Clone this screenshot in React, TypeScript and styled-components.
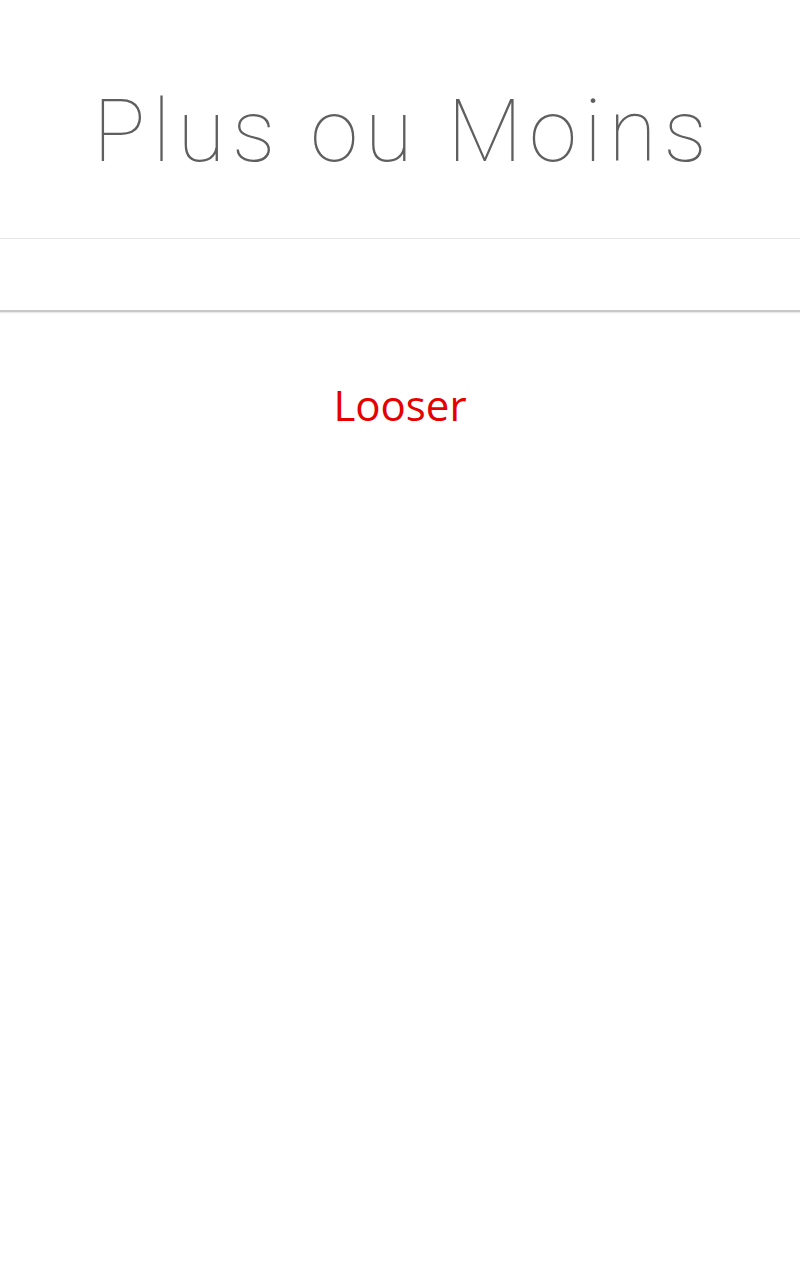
import React from "react";
import styled, { createGlobalStyle } from "styled-components";

const GlobalStyle = createGlobalStyle`
  html, body {
    margin: 0;
    padding: 0;
    background: #ffffff;
  }
`;

const Page = styled.div`
  display: flex;
  flex-direction: column;
  min-height: 1280px;
`;

const Header = styled.header`
  height: 239px;
  display: flex;
  align-items: center;
  justify-content: center;
  border-bottom: 1px solid #e6e6e6;
  box-sizing: border-box;
`;

const Title = styled.h1`
  margin: 0;
  font-family: Roboto, "Liberation Sans", sans-serif;
  font-weight: 100;
  font-size: 87px;
  letter-spacing: 7px;
  padding-left: 7px;
  color: #5f5f5f;
  line-height: 1;
  padding-top: 24px;
`;

const Guess = styled.input`
  display: block;
  width: 100%;
  height: 73px;
  box-sizing: border-box;
  border: none;
  border-bottom: 2px solid #c8c8c8;
  box-shadow: 0 1px 1px #e8e8e8;
  background: #ffffff;
  outline: none;
  font-family: "Open Sans", sans-serif;
  font-size: 32px;
  text-align: center;
  color: #555;
`;

const Message = styled.p<{ $tone: string }>`
  margin: 68px 0 0;
  text-align: center;
  font-family: "Open Sans", "Noto Sans", sans-serif;
  font-size: 42px;
  line-height: 1.2;
  color: ${(p) => p.$tone};
`;

export default function App() {
  return (
    <Page>
      <GlobalStyle />
      <Header>
        <Title>Plus ou Moins</Title>
      </Header>
      <Guess type="number" aria-label="Nombre" />
      <Message $tone="#e60000">Looser</Message>
    </Page>
  );
}
